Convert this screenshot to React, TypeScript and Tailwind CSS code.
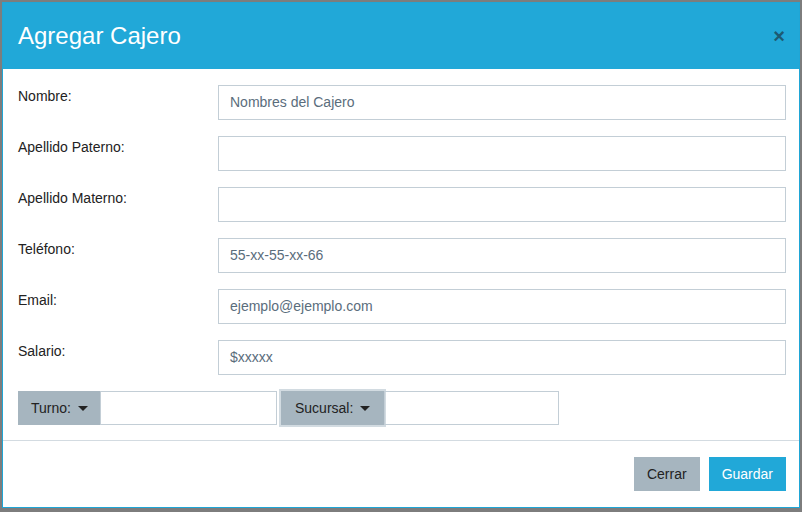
import React from "react";

const fields = [
  { label: "Nombre:", placeholder: "Nombres del Cajero" },
  { label: "Apellido Paterno:", placeholder: "" },
  { label: "Apellido Materno:", placeholder: "" },
  { label: "Teléfono:", placeholder: "55-xx-55-xx-66" },
  { label: "Email:", placeholder: "ejemplo@ejemplo.com" },
  { label: "Salario:", placeholder: "$xxxxx" }
];

function Caret() {
  return (
    <span className="ml-[7px] inline-block w-0 h-0 border-l-[5px] border-r-[5px] border-t-[5px] border-l-transparent border-r-transparent border-t-[#222]" />
  );
}

export default function App() {
  return (
    <div
      className="w-[802px] h-[512px] bg-[#7d7d7d] pt-[2px] pl-[2px] overflow-hidden"
      style={{ fontFamily: '"Liberation Sans", Arial, sans-serif' }}
    >
      <div className="w-[798px] h-[506px] bg-white border border-[#1fa6d6] flex flex-col">
        <div className="h-[66px] bg-[#21a8d8] flex items-center justify-between pl-[15px] pr-[14px] shrink-0">
          <h4 className="text-white text-[24px] leading-none">Agregar Cajero</h4>
          <span className="text-[20px] font-bold leading-none text-[#1d5a72]">×</span>
        </div>

        <div className="pt-[16px] pl-[15px] pr-[13px] pb-[15px] flex flex-col gap-[16px] border-b border-[#d3dbe1]">
          {fields.map((f) => (
            <div key={f.label} className="flex h-[35px]">
              <label className="w-[200px] shrink-0 text-[14px] text-[#222] leading-5 pt-[1px]">
                {f.label}
              </label>
              <div className="flex-1 border border-[#c3ced6] flex items-center px-[11px] text-[14px] text-[#5a6d7c]">
                {f.placeholder}
              </div>
            </div>
          ))}
          <div className="flex h-[34px] items-center">
            <div className="flex h-[34px] w-[259px]">
              <div className="w-[82px] bg-[#a6b5bf] flex items-center pl-[13px] text-[14px] text-[#222]">
                Turno:
                <Caret />
              </div>
              <div className="flex-1 border border-[#c3ced6]" />
            </div>
            <div className="flex h-[34px] w-[278px] ml-[4px]">
              <div className="w-[103px] bg-[#a6b5bf] flex items-center pl-[14px] text-[14px] text-[#222] ring-2 ring-[#d2dbe1]">
                Sucursal:
                <Caret />
              </div>
              <div className="flex-1 border border-[#c3ced6]" />
            </div>
          </div>
        </div>

        <div className="flex justify-end gap-[9px] pt-[16px] pr-[13px]">
          <button className="h-[34px] px-[13px] bg-[#a6b5bf] text-[14px] text-[#222]">Cerrar</button>
          <button className="h-[34px] px-[13px] bg-[#21a8d8] text-[14px] text-white">Guardar</button>
        </div>
      </div>
    </div>
  );
}
